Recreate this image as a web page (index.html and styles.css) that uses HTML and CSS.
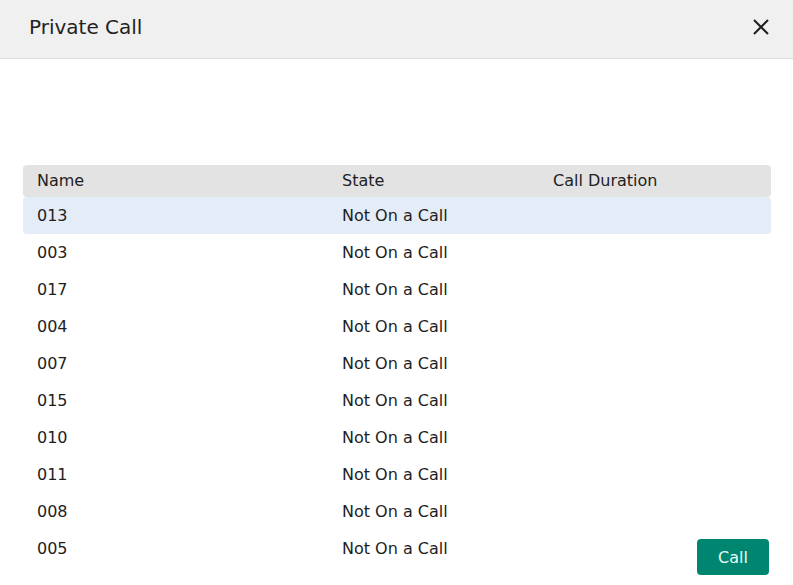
FILE: index.html
```html
<!DOCTYPE html>
<html>
<head>
<meta charset="utf-8">
<link rel="stylesheet" href="styles.css">
</head>
<body>
<div class="dialog">
  <div class="titlebar">
    <span class="title">Private Call</span>
    <button class="close" aria-label="Close">
      <svg width="16" height="16" viewBox="0 0 16 16"><path d="M1 1 L15 15 M15 1 L1 15" stroke="#1e1e1e" stroke-width="2" fill="none"/></svg>
    </button>
  </div>
  <div class="content">
    <div class="table">
      <div class="row head"><span>Name</span><span>State</span><span>Call Duration</span></div>
      <div class="row sel"><span>013</span><span>Not On a Call</span><span></span></div>
      <div class="row"><span>003</span><span>Not On a Call</span><span></span></div>
      <div class="row"><span>017</span><span>Not On a Call</span><span></span></div>
      <div class="row"><span>004</span><span>Not On a Call</span><span></span></div>
      <div class="row"><span>007</span><span>Not On a Call</span><span></span></div>
      <div class="row"><span>015</span><span>Not On a Call</span><span></span></div>
      <div class="row"><span>010</span><span>Not On a Call</span><span></span></div>
      <div class="row"><span>011</span><span>Not On a Call</span><span></span></div>
      <div class="row"><span>008</span><span>Not On a Call</span><span></span></div>
      <div class="row"><span>005</span><span>Not On a Call</span><span></span></div>
    </div>
  </div>
  <button class="call">Call</button>
</div>
</body>
</html>
```
FILE: styles.css
```css
html, body {
  margin: 0;
  padding: 0;
  background: #fff;
  font-family: "DejaVu Sans", sans-serif;
  color: #1e1e1e;
  overflow: hidden;
}
.dialog {
  position: relative;
  width: 793px;
  height: 585px;
  overflow: hidden;
}
.titlebar {
  height: 58px;
  background: #f0f0f0;
  border-bottom: 1px solid #dcdcdc;
  display: flex;
  align-items: center;
  justify-content: space-between;
  padding: 0 24px 0 29px;
}
.title {
  font-size: 20px;
  color: #222;
  position: relative;
  top: -2px;
}
.close {
  background: none;
  border: none;
  padding: 0;
  width: 16px;
  height: 16px;
  display: flex;
  position: relative;
  top: -2px;
}
.content {
  padding: 106px 22px 0 23px;
}
.table {
  display: flex;
  flex-direction: column;
}
.row {
  display: grid;
  grid-template-columns: 305px 211px 1fr;
  height: 37px;
  align-items: center;
  padding-left: 14px;
  font-size: 16px;
  color: #1e1e1e;
  border-radius: 4px;
}
.row.head {
  height: 32px;
  background: #e3e3e3;
  padding-bottom: 1px;
  box-sizing: border-box;
}
.row.sel {
  background: #e4ecf7;
}
.call {
  position: absolute;
  left: 697px;
  top: 539px;
  width: 72px;
  height: 36px;
  border: none;
  border-radius: 4px;
  background: #008670;
  color: #e6fbf6;
  font-family: "DejaVu Sans", sans-serif;
  font-size: 16px;
  padding: 0;
}
```
